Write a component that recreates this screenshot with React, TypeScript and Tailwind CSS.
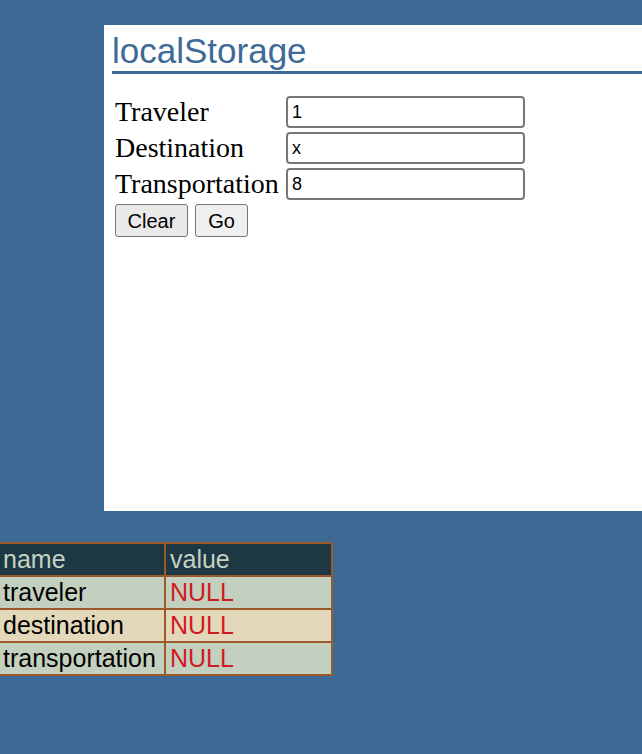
import React from 'react';

const rows = [
  { name: 'traveler', bg: 'bg-[#c4d0bf]' },
  { name: 'destination', bg: 'bg-[#e3d8b9]' },
  { name: 'transportation', bg: 'bg-[#c4d0bf]' },
];

export default function App() {
  return (
    <div className="min-h-screen overflow-hidden bg-[#3d6a95] pt-[25px]">
      <div className="ml-[104px] h-[486px] w-[600px] bg-white px-[8px] pt-[6px]">
        <h1 className="border-b-[3px] border-[#3d6a95] font-['Liberation_Sans',Arial,sans-serif] text-[35px] leading-[40px] text-[#3d6a97]">
          localStorage
        </h1>

        <div className="mt-[22px] pl-[3px] font-['Liberation_Serif','Times_New_Roman',serif]">
          <div className="grid grid-cols-[171px_239px] gap-y-[4px]">
            <label className="flex h-[32px] items-center text-[28px] text-black">Traveler</label>
            <input
              defaultValue="1"
              className="h-[32px] rounded-[4px] border-2 border-[#777] px-[4px] font-['Liberation_Sans',Arial,sans-serif] text-[18px] text-black outline-none"
            />
            <label className="flex h-[32px] items-center text-[28px] text-black">Destination</label>
            <input
              defaultValue="x"
              className="h-[32px] rounded-[4px] border-2 border-[#777] px-[4px] font-['Liberation_Sans',Arial,sans-serif] text-[18px] text-black outline-none"
            />
            <label className="flex h-[32px] items-center whitespace-nowrap text-[28px] text-black">Transportation</label>
            <input
              defaultValue="8"
              className="h-[32px] rounded-[4px] border-2 border-[#777] px-[4px] font-['Liberation_Sans',Arial,sans-serif] text-[18px] text-black outline-none"
            />
          </div>

          <div className="mt-[4px] flex gap-[7px] font-['Liberation_Sans',Arial,sans-serif]">
            <button className="h-[33px] w-[73px] rounded-[3px] border border-[#767676] bg-[#e9e9e9] text-[20px] text-black">
              Clear
            </button>
            <button className="h-[33px] w-[53px] rounded-[3px] border border-[#767676] bg-[#efefef] text-[20px] text-black">
              Go
            </button>
          </div>
        </div>
      </div>

      <table className="ml-[-2px] mt-[31px] border-collapse border-2 border-[#9c5a2a] font-['Liberation_Sans',Arial,sans-serif] text-[25px]">
        <thead>
          <tr className="bg-[#1c3845] text-[#c6d2c0]">
            <th className="h-[33px] w-[166px] border-2 border-[#9c5a2a] p-0 pl-[3px] text-left font-normal leading-none">name</th>
            <th className="h-[33px] w-[167px] border-2 border-[#9c5a2a] p-0 pl-[4px] text-left font-normal leading-none">value</th>
          </tr>
        </thead>
        <tbody>
          {rows.map((row) => (
            <tr key={row.name} className={row.bg}>
              <td className="h-[33px] border-2 border-[#9c5a2a] p-0 pl-[3px] leading-none text-black">{row.name}</td>
              <td className="h-[33px] border-2 border-[#9c5a2a] p-0 pl-[4px] leading-none text-[#d01a22]">NULL</td>
            </tr>
          ))}
        </tbody>
      </table>
    </div>
  );
}
